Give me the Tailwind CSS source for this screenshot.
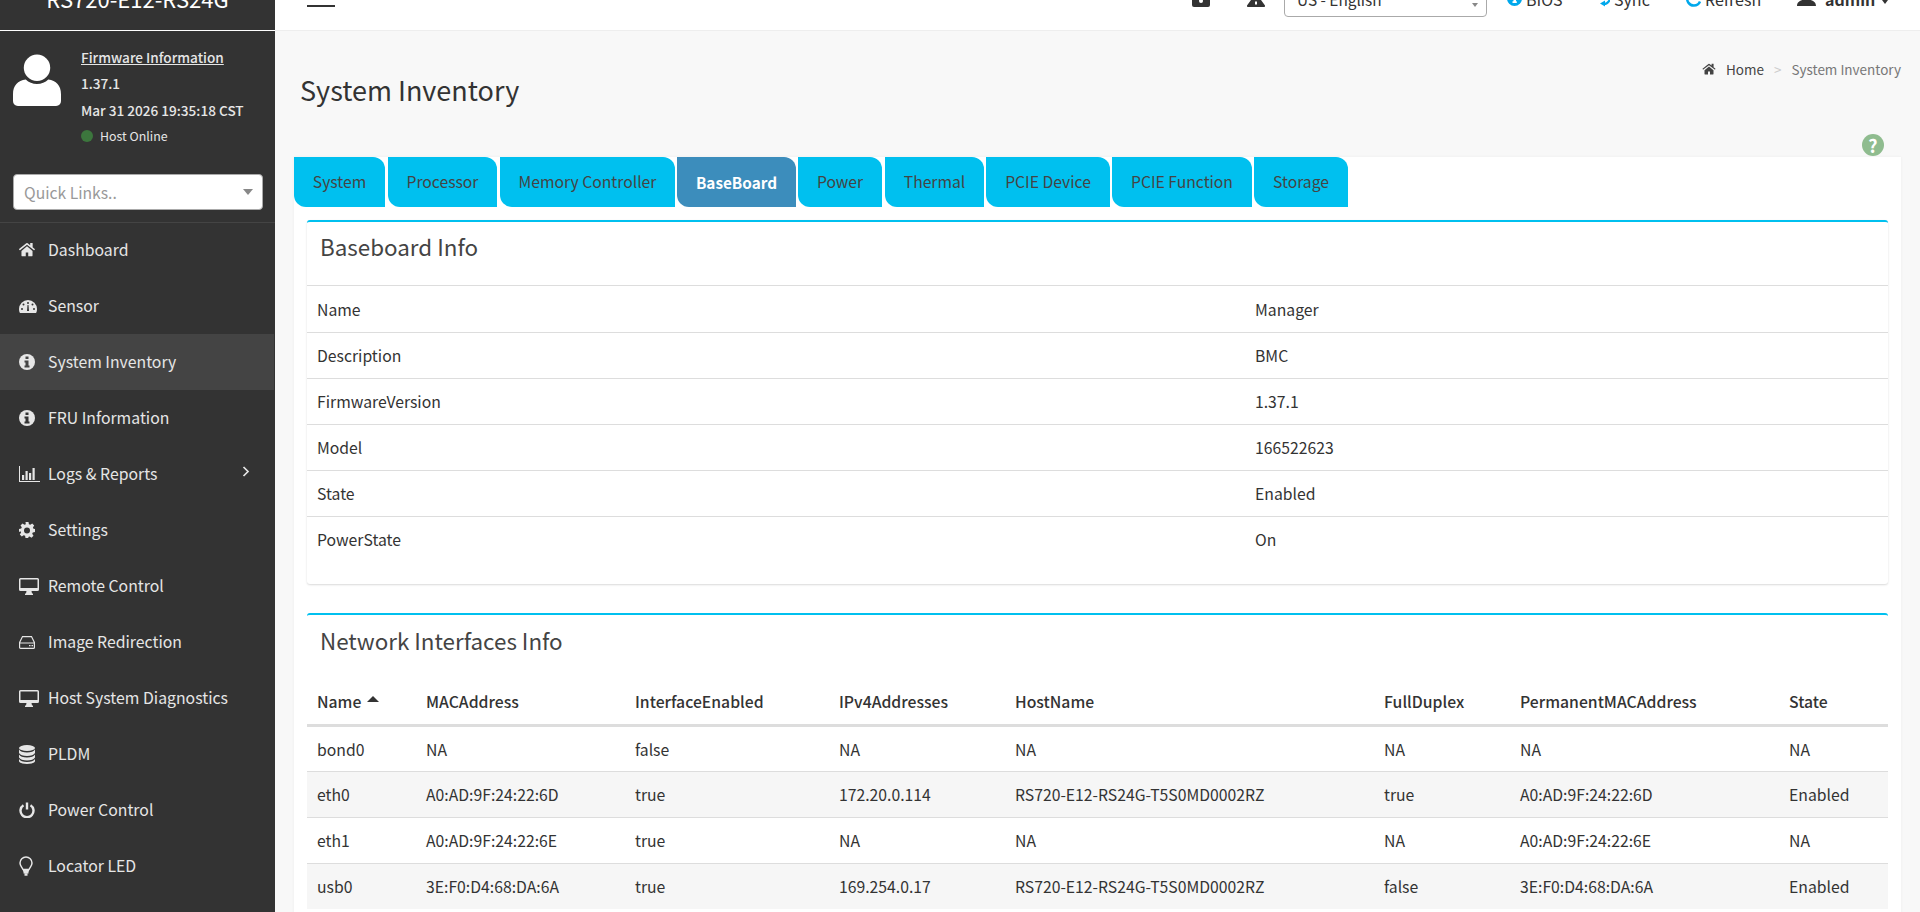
<!DOCTYPE html>
<html lang="en"><head><meta charset="utf-8"><title>System Inventory</title>
<script src="https://cdn.jsdelivr.net/npm/@tailwindcss/browser@4"></script></head>
<body class="h-[912px] overflow-hidden bg-[#f8f8f8] font-['Noto_Sans_CJK_SC','Noto_Sans',sans-serif] text-[#333]">
<div class="flex h-[912px] overflow-hidden">
<!-- SIDEBAR -->
<aside class="w-[275px] shrink-0 h-full bg-[#333] text-[#e6e6e6] overflow-hidden">
  <div class="h-[31px] border-b border-white overflow-hidden relative"><div class="absolute left-0 right-0 top-[-18px] text-center text-[22px] leading-[32px] text-white">RS720-E12-RS24G</div></div>
  <div class="h-[143px] flex pl-[13px] pt-[20px]">
    <svg class="w-[48px] h-[53px] mt-[3px] shrink-0" viewBox="0 0 49 54"><circle cx="24.500" cy="14" r="13.500" fill="#fff"/><path d="M13 26c3 3 7 4.500 11.500 4.500S33 29 36 26c8 1 13 6 13 15v7c0 3-2 5-5 5H5c-3 0-5-2-5-5v-7c0-9 5-14 13-15z" fill="#fff"/></svg>
    <div class="ml-[20px] -mt-[7px] text-[13.6px] font-medium leading-[26px]">
      <div class="underline h-[26.4px]">Firmware Information</div>
      <div class="h-[26.4px]">1.37.1</div>
      <div class="h-[26.4px]">Mar 31 2026 19:35:18 CST</div>
      <div class="flex items-center gap-[7px] h-[26.4px] font-normal text-[12.4px]"><span class="w-[12px] h-[12px] rounded-full bg-[#3c763d]"></span>Host Online</div>
    </div>
  </div>
  <div class="h-[49px] border-b border-[#444] px-[13px]">
    <div class="h-[36px] w-[250px] bg-white rounded-[4px] border border-[#aaa] flex items-center justify-between pl-[10px] pr-[9px]"><span class="text-[15.7px] text-[#999] pt-[1px]">Quick Links..</span><span class="w-0 h-0 border-x-[5px] border-x-transparent border-t-[6px] border-t-[#888]"></span></div>
  </div>
  <nav class="text-[15.8px] -mt-[1px]">
    <a class="flex items-center h-[56px] pl-[19px] gap-[13px]"><svg class="w-[16px] h-[16px]" viewBox="0 0 1664 1664" fill="currentColor"><path d="M1408 928v480q0 26-19 45t-45 19H960v-384H704v384H320q-26 0-45-19t-19-45V928l576-475zM1664 768l-62 74q-8 9-21 11h-3q-13 0-21-7L832 298 107 846q-12 8-24 7-13-2-21-11L0 768q-8-10-7-23t11-21L757 120q32-27 75-27t75 27l256 214V128q0-14 9-23t23-9h192q14 0 23 9t9 23v408l219 182q10 8 11 21t-7 23z"/></svg>Dashboard</a>
    <a class="flex items-center h-[56px] pl-[19px] gap-[13px]"><svg class="w-[18px] h-[16px]" viewBox="0 0 18 16" fill="currentColor"><path d="M9 2a9 9 0 0 0-9 9c0 1.500.3 3 1 4h16c.7-1 1-2.500 1-4a9 9 0 0 0-9-9z"/><g fill="#333"><circle cx="9" cy="5" r="1"/><circle cx="4.500" cy="6.500" r="1"/><circle cx="13.500" cy="6.500" r="1"/><circle cx="3" cy="11" r="1"/><circle cx="15" cy="11" r="1"/><path d="M8 13l.5-6h1l.5 6z"/></g></svg><span class="-ml-[2px]">Sensor</span></a>
    <a class="flex items-center h-[56px] pl-[19px] gap-[13px] bg-[#444] mr-[1px]"><svg class="w-[16px] h-[16px]" viewBox="0 0 16 16"><circle cx="8" cy="8" r="8" fill="currentColor"/><path d="M6.500 2.500h3v2.500h-3zM5.500 6.500h4v5h1v2h-5v-2h1v-3h-1z" fill="#444"/></svg>System Inventory</a>
    <a class="flex items-center h-[56px] pl-[19px] gap-[13px]"><svg class="w-[16px] h-[16px]" viewBox="0 0 16 16"><circle cx="8" cy="8" r="8" fill="currentColor"/><path d="M6.500 2.500h3v2.500h-3zM5.500 6.500h4v5h1v2h-5v-2h1v-3h-1z" fill="#333"/></svg>FRU Information</a>
    <a class="flex items-center h-[56px] pl-[19px] gap-[13px] relative"><svg class="w-[21px] h-[16px] -mr-[5px]" viewBox="0 0 21 16" fill="currentColor"><path d="M0 0h1v15h20v1H0zM3 9h2.200v5H3zM6.500 5h2.200v9H6.500zM10 7h2.200v7H10zM13.500 2h2.200v12h-2.200z"/></svg><span>Logs &amp; Reports</span><svg class="absolute left-[242px] top-[20px] w-[8px] h-[11px]" viewBox="0 0 8 11" fill="none" stroke="currentColor" stroke-width="1.700"><path d="M1.500 1l4.500 4.500L1.500 10"/></svg></a>
    <a class="flex items-center h-[56px] pl-[19px] gap-[13px]"><svg class="w-[16px] h-[16px]" viewBox="0 0 16 16" fill="currentColor"><path fill-rule="evenodd" d="M6.500 0h3l.4 2.200 1.400.6L13.200 1.500l2 2-1.300 1.900.6 1.400L16 7v3l-2.200.4-.6 1.400 1.300 1.900-2 2-1.900-1.300-1.400.6L9.500 16h-3l-.4-2.200-1.400-.6-1.900 1.300-2-2 1.300-1.900-.6-1.400L0 10V7l2.200-.4.6-1.400L1.500 3.500l2-2 1.900 1.300 1.400-.6zM8 5.500a3 3 0 1 0 0 6 3 3 0 0 0 0-6z"/></svg>Settings</a>
    <a class="flex items-center h-[56px] pl-[19px] gap-[13px]"><svg class="w-[20px] h-[17px] -mr-[4px]" viewBox="0 0 20 17" fill="currentColor"><path fill-rule="evenodd" d="M1.500 0h17A1.500 1.500 0 0 1 20 1.500v10a1.500 1.500 0 0 1-1.500 1.500H12.500l.5 2.500h1v1.500H6v-1.500h1l.5-2.500h-6A1.500 1.500 0 0 1 0 11.500v-10A1.500 1.500 0 0 1 1.500 0zM1.500 1.500V10h17V1.500z"/></svg>Remote Control</a>
    <a class="flex items-center h-[56px] pl-[19px] gap-[13px]"><svg class="w-[16px] h-[13px]" viewBox="0 0 16 13" fill="none" stroke="currentColor" stroke-width="1.200"><path d="M3.500 .6h9L15.400 6.500v4.900a1 1 0 0 1-1 1H1.600a1 1 0 0 1-1-1V6.500zM.6 7h14.800"/><path d="M10 9.700h1.500M12.500 9.700H14"/></svg>Image Redirection</a>
    <a class="flex items-center h-[56px] pl-[19px] gap-[13px]"><svg class="w-[20px] h-[17px] -mr-[4px]" viewBox="0 0 20 17" fill="currentColor"><path fill-rule="evenodd" d="M1.500 0h17A1.500 1.500 0 0 1 20 1.500v10a1.500 1.500 0 0 1-1.500 1.500H12.500l.5 2.500h1v1.500H6v-1.500h1l.5-2.500h-6A1.500 1.500 0 0 1 0 11.500v-10A1.500 1.500 0 0 1 1.500 0zM1.500 1.500V10h17V1.500z"/></svg>Host System Diagnostics</a>
    <a class="flex items-center h-[56px] pl-[19px] gap-[13px]"><svg class="w-[16px] h-[19px]" viewBox="0 0 16 19" fill="currentColor"><ellipse cx="8" cy="3" rx="8" ry="3"/><path d="M0 4.500c1 2 4 3 8 3s7-1 8-3V8c-1 2-4 3-8 3S1 10 0 8zM0 9.500c1 2 4 3 8 3s7-1 8-3V12.500c-1 2-4 3-8 3s-7-1-8-3zM0 14c1 2 4 3 8 3s7-1 8-3v2c0 2-4 3-8 3s-8-1-8-3z"/></svg>PLDM</a>
    <a class="flex items-center h-[56px] pl-[19px] gap-[13px]"><svg class="w-[16px] h-[16px]" viewBox="0 0 16 16" fill="none" stroke="currentColor" stroke-width="2.400"><path d="M4.500 3.200a6.500 6.500 0 1 0 7 0"/><path d="M8 .5v7"/></svg>Power Control</a>
    <a class="flex items-center h-[56px] pl-[19px] gap-[13px]"><svg class="w-[14px] h-[20px] mr-[2px]" viewBox="0 0 14 20" fill="none" stroke="currentColor" stroke-width="1.500"><path d="M4 13.500C3 11 1 9.800 1 7a6 6 0 0 1 12 0c0 2.800-2 4-3 6.500z"/><path d="M4 14.500h6M4.500 16.500h5" stroke-width="2"/><path d="M5.500 18.500h3" stroke-width="2.500"/></svg>Locator LED</a>
  </nav>
</aside>
<!-- MAIN -->
<div class="flex-1 min-w-0 h-full flex flex-col">
  <header class="h-[31px] shrink-0 bg-white border-b border-[#eee] overflow-hidden relative text-[16px] text-[#333]">
    <span class="absolute left-[32px] top-[5px] w-[28px] h-[2px] bg-[#333]"></span>
    <svg class="absolute left-[917px] top-0 w-[18px] h-[7px]" viewBox="0 0 18 7" fill="#333"><path d="M0 0h18v5a2 2 0 0 1-2 2H2a2 2 0 0 1-2-2z"/><circle cx="9" cy="1" r="2" fill="#fff"/></svg>
    <svg class="absolute left-[972px] top-0 w-[18px] h-[7px]" viewBox="0 0 18 7" fill="#333"><path d="M4 0h10l4 5.500a1 1 0 0 1-1 1.500H1a1 1 0 0 1-1-1.500z"/><path d="M8 1.500h2v3H8z" fill="#fff"/></svg>
    <div class="absolute left-[1009px] -top-[20px] w-[203px] h-[37px] border border-[#aaa] rounded-[4px] pl-[12px] flex items-center text-[15.4px] bg-white"><span class="mt-[3px]">US - English</span><span class="absolute right-[8px] top-[22px] w-0 h-0 border-x-[3px] border-x-transparent border-t-[4px] border-t-[#888]"></span></div>
    <svg class="absolute left-[1232px] -top-[9px] w-[15px] h-[15px]" viewBox="0 0 15 15"><circle cx="7.500" cy="7.500" r="7.500" fill="#00a8ec"/><path d="M6.500 9h2.500v1.200h.8v1.800H5.500v-1.800h1z" fill="#fff"/></svg>
    <span class="absolute left-[1251px] -top-[13px] leading-[24px]">BIOS</span>
    <svg class="absolute left-[1323px] -top-[4px] w-[12px] h-[11px]" viewBox="0 0 12 11" fill="none" stroke="#00a8ec" stroke-width="2.200"><path d="M11 0a5.500 5.500 0 0 1-5 8"/><path d="M7 4.500v6L2 7.500z" fill="#00a8ec" stroke="none"/></svg>
    <span class="absolute left-[1339px] -top-[13px] leading-[24px]">Sync</span>
    <svg class="absolute left-[1411px] -top-[4px] w-[16px] h-[11px]" viewBox="0 0 16 11" fill="none" stroke="#00a8ec" stroke-width="2.500"><path d="M2 0a6.500 6.500 0 0 0 6 9.500 6.500 6.500 0 0 0 6-4"/></svg>
    <span class="absolute left-[1430px] -top-[13px] leading-[24px]">Refresh</span>
    <svg class="absolute left-[1522px] top-0 w-[19px] h-[6px]" viewBox="0 0 19 6" fill="#333"><path d="M5 0h9c2 1 5 2 5 6H0c0-4 3-5 5-6z"/></svg>
    <span class="absolute left-[1550px] -top-[13px] leading-[24px] font-bold">admin</span>
    <span class="absolute left-[1607px] top-0 w-0 h-0 border-x-[3px] border-x-transparent border-t-[4px] border-t-[#333]"></span>
  </header>
  <main class="flex-1 min-h-0 overflow-hidden pl-[19px] pr-[19px] relative">
    <div class="flex justify-between h-[126px]">
      <h1 class="text-[27px] leading-[40px] mt-[39px] ml-[6px] font-normal text-[#333]">System Inventory</h1>
      <div class="flex items-center h-[20px] mt-[28px] text-[13.5px] text-[#777]">
        <svg class="w-[14px] h-[13px] mr-[10px]" viewBox="0 0 1664 1664" fill="#444"><path d="M1408 928v480q0 26-19 45t-45 19H960v-384H704v384H320q-26 0-45-19t-19-45V928l576-475zM1664 768l-62 74q-8 9-21 11h-3q-13 0-21-7L832 298 107 846q-12 8-24 7-13-2-21-11L0 768q-8-10-7-23t11-21L757 120q32-27 75-27t75 27l256 214V128q0-14 9-23t23-9h192q14 0 23 9t9 23v408l219 182q10 8 11 21t-7 23z"/></svg>
        <span class="text-[#444]">Home</span><span class="mx-[10px] text-[#ccc]">&gt;</span><span>System Inventory</span>
      </div>
    </div>
    <span class="absolute right-[36px] top-[103px] w-[22px] h-[22px] rounded-full bg-[#8fbc8f] text-white font-bold text-[18px] leading-[22px] text-center">?</span>
    <div class="bg-white h-[760px] shadow-[0_0_3px_rgba(0,0,0,0.05)]">
      <div class="flex gap-[2px] h-[63px] text-[15.7px] text-[#444]">
        <div class="h-[50px] w-[91px] bg-[#00c0ef] rounded-tr-[12px] rounded-bl-[12px] flex items-center justify-center">System</div>
        <div class="h-[50px] w-[109px] ml-[1px] bg-[#00c0ef] rounded-tr-[12px] rounded-bl-[12px] flex items-center justify-center">Processor</div>
        <div class="h-[50px] w-[175px] ml-[1px] bg-[#00c0ef] rounded-tr-[12px] rounded-bl-[12px] flex items-center justify-center">Memory Controller</div>
        <div class="h-[50px] w-[119px] bg-[#3c8dbc] rounded-tr-[12px] rounded-bl-[12px] flex items-center justify-center text-white font-bold text-[15.3px]">BaseBoard</div>
        <div class="h-[50px] w-[84px] bg-[#00c0ef] rounded-tr-[12px] rounded-bl-[12px] flex items-center justify-center">Power</div>
        <div class="h-[50px] w-[99px] ml-[1px] bg-[#00c0ef] rounded-tr-[12px] rounded-bl-[12px] flex items-center justify-center">Thermal</div>
        <div class="h-[50px] w-[124px] bg-[#00c0ef] rounded-tr-[12px] rounded-bl-[12px] flex items-center justify-center">PCIE Device</div>
        <div class="h-[50px] w-[140px] bg-[#00c0ef] rounded-tr-[12px] rounded-bl-[12px] flex items-center justify-center">PCIE Function</div>
        <div class="h-[50px] w-[94px] bg-[#00c0ef] rounded-tr-[12px] rounded-bl-[12px] flex items-center justify-center">Storage</div>
      </div>
      <div class="mx-[13px]">
        <section class="h-[364px] bg-white rounded-[3px] border-t-2 border-[#00c0ef] shadow-[0_1px_2px_rgba(0,0,0,0.15)] mb-[29px]">
          <h3 class="h-[64px] pl-[13px] pt-[8px] text-[22.4px] leading-[32px] font-normal text-[#444] border-b border-[#ddd]">Baseboard Info</h3>
          <table class="w-full table-fixed text-[15.75px] text-[#333]"><colgroup><col class="w-[948px]"><col></colgroup><tbody>
            <tr class="h-[46px] border-b border-[#ddd]"><td class="pl-[10px] pt-[2px]">Name</td><td class="pt-[2px]">Manager</td></tr>
            <tr class="h-[46px] border-b border-[#ddd]"><td class="pl-[10px] pt-[2px]">Description</td><td class="pt-[2px]">BMC</td></tr>
            <tr class="h-[46px] border-b border-[#ddd]"><td class="pl-[10px] pt-[2px]">FirmwareVersion</td><td class="pt-[2px]">1.37.1</td></tr>
            <tr class="h-[46px] border-b border-[#ddd]"><td class="pl-[10px] pt-[2px]">Model</td><td class="pt-[2px]">166522623</td></tr>
            <tr class="h-[46px] border-b border-[#ddd]"><td class="pl-[10px] pt-[2px]">State</td><td class="pt-[2px]">Enabled</td></tr>
            <tr class="h-[46px]"><td class="pl-[10px] pt-[2px]">PowerState</td><td class="pt-[2px]">On</td></tr>
          </tbody></table>
        </section>
        <section class="bg-white rounded-[3px] border-t-2 border-[#00c0ef]">
          <h3 class="h-[69px] pl-[13px] pt-[9px] text-[22.4px] leading-[32px] font-normal text-[#444]">Network Interfaces Info</h3>
          <table class="w-full table-fixed text-[15.75px] text-[#333] text-left [&_td]:pt-[2px]"><colgroup><col class="w-[119px]"><col class="w-[209px]"><col class="w-[204px]"><col class="w-[176px]"><col class="w-[369px]"><col class="w-[136px]"><col class="w-[269px]"><col></colgroup>
            <thead><tr class="h-[41px] border-b-[3px] border-[#ddd]"><th class="pl-[10px] pb-[4px] font-medium"><span class="inline-flex items-center gap-[6px]">Name<span class="w-0 h-0 border-x-[6px] border-x-transparent border-b-[6px] border-b-[#333] -mt-[6px]"></span></span></th><th class="pb-[4px] font-medium">MACAddress</th><th class="pb-[4px] font-medium">InterfaceEnabled</th><th class="pb-[4px] font-medium">IPv4Addresses</th><th class="pb-[4px] font-medium">HostName</th><th class="pb-[4px] font-medium">FullDuplex</th><th class="pb-[4px] font-medium">PermanentMACAddress</th><th class="pb-[4px] font-medium">State</th></tr></thead>
            <tbody>
              <tr class="h-[46px] border-b border-[#ddd]"><td class="pl-[10px]">bond0</td><td>NA</td><td>false</td><td>NA</td><td>NA</td><td>NA</td><td>NA</td><td>NA</td></tr>
              <tr class="h-[46px] border-b border-[#ddd] bg-[#f6f6f6]"><td class="pl-[10px]">eth0</td><td>A0:AD:9F:24:22:6D</td><td>true</td><td>172.20.0.114</td><td>RS720-E12-RS24G-T5S0MD0002RZ</td><td>true</td><td>A0:AD:9F:24:22:6D</td><td>Enabled</td></tr>
              <tr class="h-[46px] border-b border-[#ddd]"><td class="pl-[10px]">eth1</td><td>A0:AD:9F:24:22:6E</td><td>true</td><td>NA</td><td>NA</td><td>NA</td><td>A0:AD:9F:24:22:6E</td><td>NA</td></tr>
              <tr class="h-[46px] bg-[#f6f6f6]"><td class="pl-[10px]">usb0</td><td>3E:F0:D4:68:DA:6A</td><td>true</td><td>169.254.0.17</td><td>RS720-E12-RS24G-T5S0MD0002RZ</td><td>false</td><td>3E:F0:D4:68:DA:6A</td><td>Enabled</td></tr>
            </tbody></table>
        </section>
      </div>
    </div>
  </main>
</div>
</div>
</body></html>
